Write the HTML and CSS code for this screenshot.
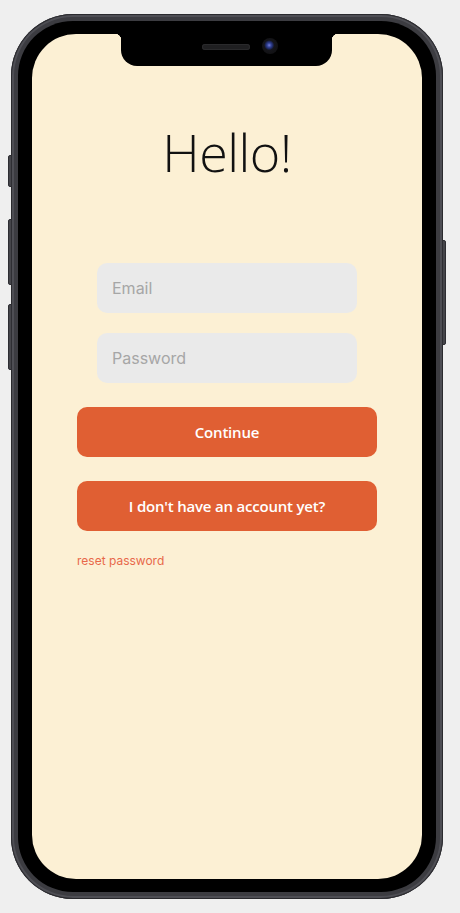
FILE: index.html
```html
<!DOCTYPE html>
<html>
<head>
<meta charset="utf-8">
<link rel="stylesheet" href="styles.css">
</head>
<body>
<div class="phone">
  <span class="btn-side b1"></span>
  <span class="btn-side b2"></span>
  <span class="btn-side b3"></span>
  <span class="btn-side power"></span>
  <div class="bezel">
    <div class="screen">
      <div class="notch">
        <span class="speaker"></span>
        <span class="camera"></span>
      </div>
      <h1 class="title">Hello!</h1>
      <form class="form">
        <input class="field" type="email" placeholder="Email">
        <input class="field field-pw" type="password" placeholder="Password">
        <button class="btn btn-continue" type="button">Continue</button>
        <button class="btn btn-signup" type="button">I don't have an account yet?</button>
        <a class="reset" href="#">reset password</a>
      </form>
    </div>
  </div>
</div>
</body>
</html>
```

FILE: styles.css
```css
* { box-sizing: border-box; }
html, body { margin: 0; padding: 0; }
body {
  background: #efefef;
  width: 460px;
  height: 913px;
  overflow: hidden;
}
.phone {
  position: relative;
  margin: 14px 0 0 11px;
  width: 432px;
  height: 885px;
  border-radius: 62px;
  padding: 7px;
  background: #3c3c41;
  box-shadow: inset 0 0 0 1px #2a2a2e, inset 0 0 0 3px #4e4e54;
}
.btn-side {
  position: absolute;
  width: 4px;
  background: #45454a;
  border: 1px solid #2e2e33;
}
.b1 { left: -3px; top: 141px; height: 32px; border-radius: 2px 0 0 2px; }
.b2 { left: -3px; top: 205px; height: 66px; border-radius: 2px 0 0 2px; }
.b3 { left: -3px; top: 290px; height: 66px; border-radius: 2px 0 0 2px; }
.power { right: -3px; top: 226px; height: 105px; border-radius: 0 2px 2px 0; }
.bezel {
  height: 100%;
  background: #000;
  border-radius: 55px;
  padding: 13px 14px;
}
.screen {
  position: relative;
  height: 100%;
  background: #fcf0d4;
  border-radius: 44px;
  overflow: hidden;
  display: flex;
  flex-direction: column;
  align-items: center;
}
.notch {
  position: absolute;
  top: 0;
  left: 89px;
  width: 211px;
  height: 32px;
  background: #000;
  border-radius: 0 0 16px 16px;
}
.notch::before, .notch::after {
  content: "";
  position: absolute;
  top: 0;
  width: 6px;
  height: 6px;
}
.notch::before {
  left: -6px;
  background: radial-gradient(circle at 0 100%, transparent 6px, #000 6.5px);
}
.notch::after {
  right: -6px;
  background: radial-gradient(circle at 100% 100%, transparent 6px, #000 6.5px);
}
.speaker {
  position: absolute;
  left: 81px;
  top: 10px;
  width: 48px;
  height: 6px;
  border-radius: 3px;
  background: #1f1f21;
  box-shadow: inset 0 0 0 1px #2a2a2c;
}
.camera {
  position: absolute;
  left: 141px;
  top: 4px;
  width: 16px;
  height: 16px;
  border-radius: 50%;
  background: radial-gradient(circle at 45% 45%, #7a80d8 0, #33449a 2px, #1a2250 4px, #15151a 5px, #121215 8px);
}
.title {
  margin: 88px 0 0;
  font-family: "Open Sans", sans-serif;
  font-weight: 300;
  font-size: 52px;
  line-height: 60px;
  color: #111;
  letter-spacing: -0.5px;
}
.form {
  width: 300px;
  margin-top: 81px;
  display: flex;
  flex-direction: column;
  align-items: center;
}
.field {
  width: 260px;
  height: 50px;
  border: none;
  border-radius: 10px;
  background: #eaeaea;
  padding: 0 15px;
  font-family: Inter, sans-serif;
  font-size: 16px;
  color: #333;
  outline: none;
}
.field::placeholder { color: #a6a6a6; }
.field-pw { margin-top: 20px; }
.btn {
  width: 300px;
  height: 50px;
  border: none;
  border-radius: 10px;
  background: #e05f33;
  color: #fff;
  font-family: "Open Sans", sans-serif;
  font-weight: 600;
  font-size: 15px;
  letter-spacing: -0.2px;
  margin-top: 24px;
  padding: 0;
}
.reset {
  align-self: flex-start;
  margin-top: 22px;
  font-family: Inter, sans-serif;
  font-size: 12px;
  line-height: 16px;
  color: #e8684a;
  text-decoration: none;
}
```
